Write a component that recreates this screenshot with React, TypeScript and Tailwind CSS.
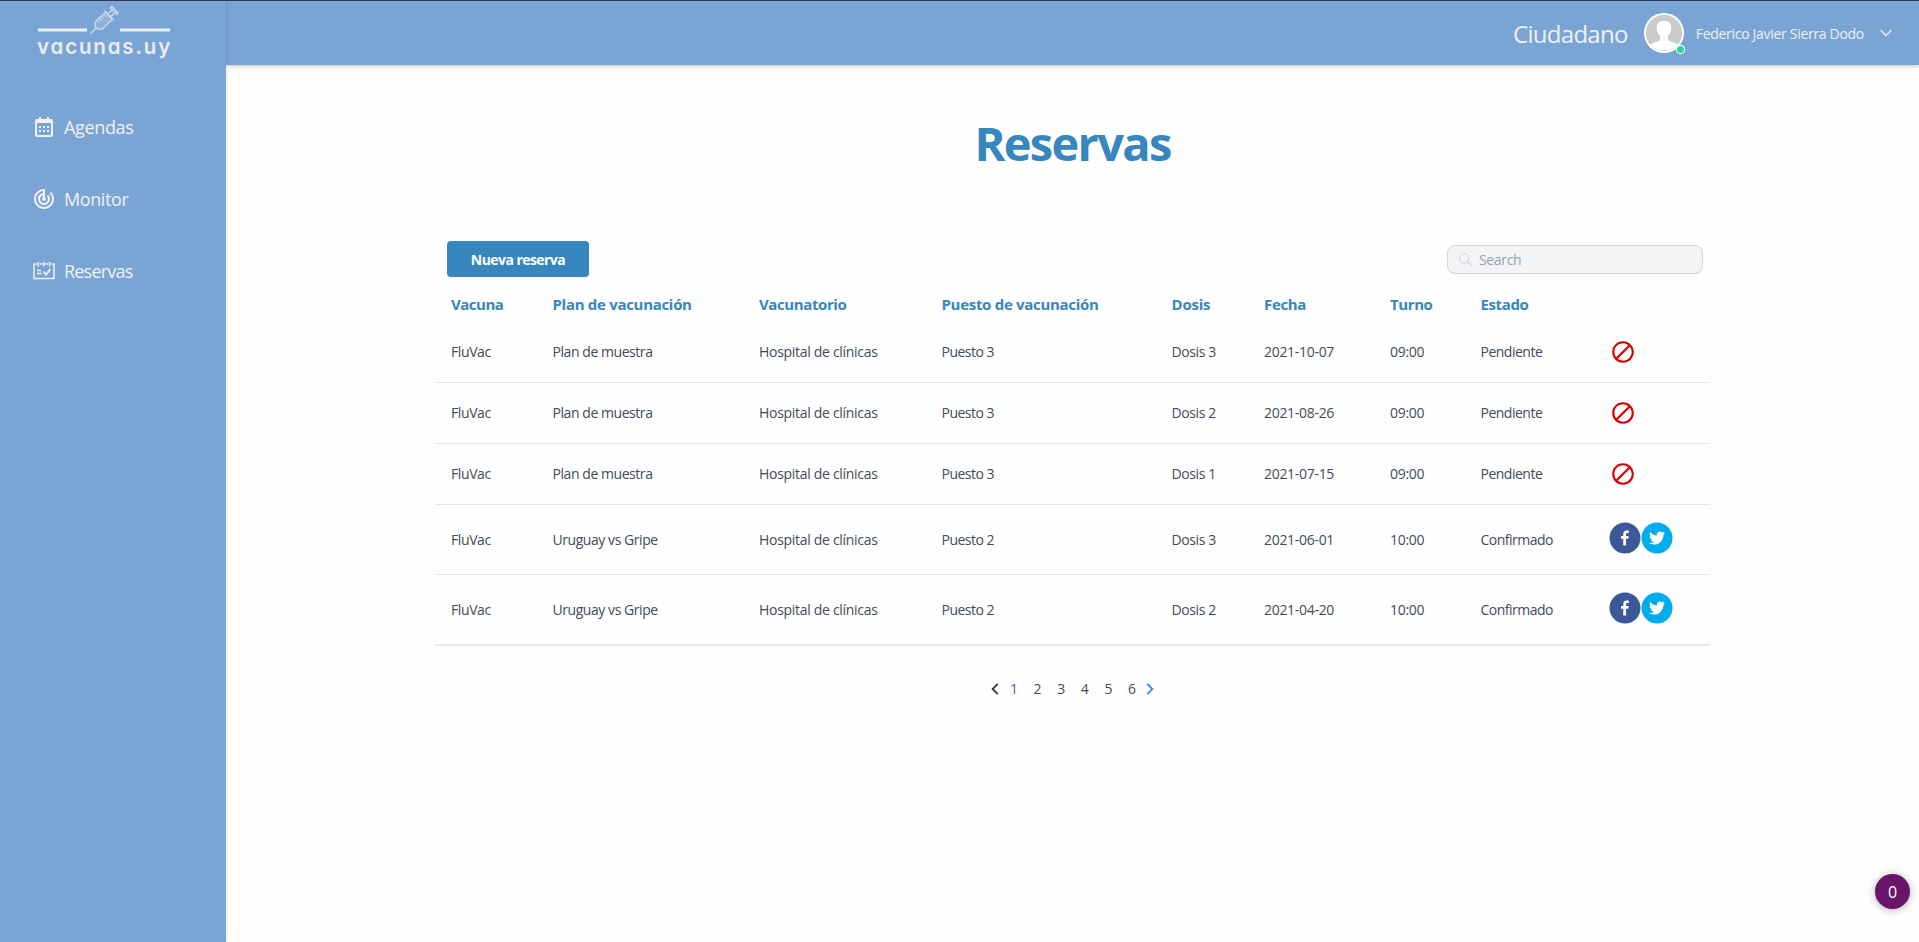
import { BiBlock, BiCalendar } from "react-icons/bi";
import { MdTrackChanges } from "react-icons/md";

const GRID =
  "grid grid-cols-[101.5px_206.5px_182.5px_230px_92.5px_126px_90.5px_128.5px_1fr] items-center pl-4";

const COLUMNS = [
  { label: "Vacuna", head: "tracking-[-0.5px]", cell: "tracking-[-0.4px]" },
  { label: "Plan de vacunación", head: "tracking-[-0.3px]", cell: "tracking-[-0.44px]" },
  { label: "Vacunatorio", head: "tracking-[-0.4px]", cell: "tracking-[-0.3px]" },
  { label: "Puesto de vacunación", head: "tracking-[-0.3px]", cell: "tracking-[-0.5px]" },
  { label: "Dosis", head: "tracking-[-0.2px]", cell: "tracking-[-0.4px]" },
  { label: "Fecha", head: "tracking-[-0.35px]", cell: "tracking-[-0.3px]" },
  { label: "Turno", head: "tracking-[-0.4px]", cell: "tracking-[-0.3px]" },
  { label: "Estado", head: "tracking-[-0.38px]", cell: "tracking-[-0.5px]" },
];

const ROWS = [
  { cells: ["FluVac", "Plan de muestra", "Hospital de clínicas", "Puesto 3", "Dosis 3", "2021-10-07", "09:00", "Pendiente"], done: false },
  { cells: ["FluVac", "Plan de muestra", "Hospital de clínicas", "Puesto 3", "Dosis 2", "2021-08-26", "09:00", "Pendiente"], done: false },
  { cells: ["FluVac", "Plan de muestra", "Hospital de clínicas", "Puesto 3", "Dosis 1", "2021-07-15", "09:00", "Pendiente"], done: false },
  { cells: ["FluVac", "Uruguay vs Gripe", "Hospital de clínicas", "Puesto 2", "Dosis 3", "2021-06-01", "10:00", "Confirmado"], done: true },
  { cells: ["FluVac", "Uruguay vs Gripe", "Hospital de clínicas", "Puesto 2", "Dosis 2", "2021-04-20", "10:00", "Confirmado"], done: true },
];

function Logo() {
  return (
    <div className="ml-[37px] flex w-[134px] flex-col">
      <svg width="134" height="34" viewBox="0 0 134 34" fill="none">
        <path d="M1 29h49M83 29h50" strokeWidth="2.8" stroke="#eceff3" />
        <g transform="translate(53.5 32.5) rotate(-44)" stroke="#c6d8ec" strokeWidth="1.5">
          <path
            d="M8 -1.500l3.500 -3.500H25.500V5H11.500L8 1.500z"
            fill="#c6d8ec"
            fillOpacity="0.25"
          />
          <path d="M0 0H8M26 -6.500V6.500M26 -2H31.500M26 2H31.500M32 -4.500V4.500H34V-4.500z" />
          <path d="M14 -4.500v2.500M17 -4.500v3.500M20 -4.500v2.500M23 -4.500v3.500" strokeWidth="1" />
        </g>
      </svg>
      <span className="-mt-[2px] font-['Inter','Lato',sans-serif] text-[20.5px] leading-[28px] font-semibold tracking-[1.85px] whitespace-nowrap text-[#e8edf4] [font-feature-settings:'cv11']">
        vacunas.uy
      </span>
    </div>
  );
}

function BookingIcon() {
  return (
    <svg width="24" height="24" viewBox="0 0 24 24" fill="none" stroke="currentColor" strokeWidth="1.5">
      <path d="M5 5H2v14.500h20V5h-2.500M8 5h2.500M13 5h3M6.300 3v4.400M11.800 3v4.400M17.600 3v4.400" />
      <path d="M5 11.500H9M5 14.500H9.500M9 17" strokeWidth="1.300" />
      <path d="M11.500 12.500l2.600 3.200 4.200-5.600" strokeWidth="1.8" />
    </svg>
  );
}

function Sidebar() {
  const item = "flex h-[72px] items-center gap-2 pl-8 text-[18px] text-[#f0f1f2]";
  return (
    <aside className="z-10 flex w-[226px] shrink-0 flex-col bg-[#7aa4d3] shadow-[0_0_3px_rgba(0,0,0,0.15)]">
      <Logo />
      <nav className="mt-[30px] flex flex-col">
        <a className={item}>
          <BiCalendar size={24} />
          <span className="tracking-[-0.35px]">Agendas</span>
        </a>
        <a className={item}>
          <MdTrackChanges size={24} />
          <span className="tracking-[-0.4px]">Monitor</span>
        </a>
        <a className={item}>
          <BookingIcon />
          <span className="tracking-[-0.8px]">Reservas</span>
        </a>
      </nav>
    </aside>
  );
}

function Avatar() {
  return (
    <div className="relative ml-4 size-10">
      <svg width="40" height="40" viewBox="0 0 40 40">
        <circle cx="20" cy="20" r="20" fill="#fff" />
        <circle cx="20" cy="20" r="18.2" fill="#cbcbcb" />
        <path
          d="M20 8c-5 0-7.200 2-7 6.500 0 .8-.6 1.100-.4 2.200.2 1.300.8 1.600 1.200 2.300.6 2.300 1.700 3.200 2.300 4.200.3 2.300.1 4-1.500 4.900-2.600 1.400-5.900 1.300-8.400 3.300A18.200 18.200 0 0 0 33.800 31.400c-2.500-2-5.800-1.900-8.400-3.300-1.600-.9-1.800-2.600-1.500-4.900.6-1 1.700-1.900 2.300-4.200.4-.7 1-1 1.200-2.300.2-1.100-.4-1.400-.4-2.200C27.200 10 25 8 20 8z"
          fill="#fff"
        />
      </svg>
      <span className="absolute right-0 bottom-0 size-[7px] rounded-full bg-[#2fd495] ring-1 ring-white" />
    </div>
  );
}

function Header() {
  return (
    <header className="flex h-16 shrink-0 items-center justify-end bg-[#7aa4d3] pr-[26px] text-[#eff0f2] shadow-[0_1px_4px_rgba(0,0,0,0.25)]">
      <span className="pt-0.5 text-2xl tracking-[-0.7px]">Ciudadano</span>
      <Avatar />
      <span className="ml-3 pt-px text-sm tracking-[-0.3px]">Federico Javier Sierra Dodo</span>
      <svg className="ml-[15px]" width="14" height="8" viewBox="0 0 14 8" fill="none" stroke="currentColor" strokeWidth="1.3">
        <path d="M1.500 1l5.500 5.500L12.500 1" />
      </svg>
    </header>
  );
}

function ShareButtons() {
  return (
    <div className="flex -translate-y-[2px]">
      <svg viewBox="0 0 64 64" width="32" height="32">
        <circle cx="32" cy="32" r="31" fill="#3b5998" />
        <path
          d="M34.1,47V33.3h4.6l0.7-5.3h-5.3v-3.4c0-1.5,0.4-2.6,2.6-2.6l2.8,0v-4.8c-0.5-0.1-2.200-0.2-4.1-0.2c-4.1,0-6.9,2.5-6.9,7V28H24v5.3h4.5V47H34.1z"
          fill="#fff"
        />
      </svg>
      <svg viewBox="0 0 64 64" width="32" height="32">
        <circle cx="32" cy="32" r="31" fill="#00aced" />
        <path
          d="M48,22.1c-1.2,0.5-2.4,0.9-3.8,1c1.4-0.8,2.4-2.1,2.9-3.6c-1.3,0.8-2.7,1.3-4.2,1.6C41.7,19.8,40,19,38.2,19c-3.6,0-6.6,2.9-6.6,6.6c0,0.5,0.1,1,0.2,1.5c-5.5-0.3-10.3-2.9-13.5-6.9c-0.6,1-0.9,2.1-0.9,3.3c0,2.3,1.2,4.3,2.9,5.5c-1.1,0-2.1-0.3-3-0.8c0,0,0,0.1,0,0.1c0,3.2,2.3,5.8,5.3,6.4c-0.6,0.1-1.1,0.2-1.7,0.2c-0.4,0-0.8,0-1.2-0.1c0.8,2.6,3.3,4.5,6.1,4.6c-2.2,1.8-5.1,2.8-8.2,2.8c-0.5,0-1.1,0-1.6-0.1c2.9,1.9,6.4,2.9,10.1,2.9c12.1,0,18.7-10,18.7-18.7c0-0.3,0-0.6,0-0.8C46,24.5,47.1,23.4,48,22.1z"
          fill="#fff"
        />
      </svg>
    </div>
  );
}

function Toolbar() {
  return (
    <div className="flex h-9 justify-between pr-[7px] pl-3">
      <button className="h-9 w-[142px] rounded bg-[#3786bd] pt-px text-sm font-bold tracking-[-0.55px] text-white">
        Nueva reserva
      </button>
      <label className="mt-1 flex h-[29px] w-64 items-center rounded-lg border border-gray-300 bg-gray-100 pl-[11px] text-sm text-gray-400">
        <svg width="13" height="13" viewBox="0 0 13 13" fill="none" stroke="#d0d3d8" strokeWidth="1.1">
          <circle cx="5.300" cy="5.300" r="4.600" />
          <path d="M8.600 8.600l4 4" />
        </svg>
        <span className="ml-[7px] pt-px tracking-[-0.35px]">Search</span>
      </label>
    </div>
  );
}

function ReservationsTable() {
  return (
    <div className="flex flex-col">
      <div className={`${GRID} h-[45px] pt-[10px] text-[15px] font-bold text-[#3786bd]`}>
        {COLUMNS.map((c) => (
          <span key={c.label} className={c.head}>
            {c.label}
          </span>
        ))}
      </div>
      <div className="flex flex-col text-sm text-[#434b5a] shadow-[0_1px_1px_rgba(0,0,0,0.08)]">
        {ROWS.map((row, i) => (
          <div
            key={i}
            className={`${GRID} border-b border-gray-200 ${row.done ? "h-[70px]" : "h-[61px]"}`}
          >
            {row.cells.map((cell, j) => (
              <span key={j} className={COLUMNS[j].cell}>
                {cell}
              </span>
            ))}
            {row.done ? <ShareButtons /> : <BiBlock size={26} color="#d60000" className="ml-px -scale-x-100" />}
          </div>
        ))}
      </div>
    </div>
  );
}

function Pagination() {
  return (
    <div className="mt-8 flex h-6 items-center justify-center text-sm text-[#434b5a]">
      <svg width="8" height="12" viewBox="0 0 8 12" fill="none" stroke="#2b3442" strokeWidth="1.8">
        <path d="M6.800 0.800L1.600 6l5.200 5.200" />
      </svg>
      <div className="flex pr-[2px] pl-[3px]">
        {["1", "2", "3", "4", "5", "6"].map((n) => (
          <span key={n} className={`w-[23.6px] text-center ${n === "1" ? "text-[#5b50dd]" : ""}`}>
            {n}
          </span>
        ))}
      </div>
      <svg width="8" height="12" viewBox="0 0 8 12" fill="none" stroke="#3b82f6" strokeWidth="1.8">
        <path d="M1.200 0.800L6.400 6l-5.200 5.200" />
      </svg>
    </div>
  );
}

export default function App() {
  return (
    <div className="flex h-[942px] w-[1919px] flex-col overflow-hidden border-t border-[#31384a] bg-[#fefefe] font-['Open_Sans','Noto_Sans',sans-serif]">
      <div className="flex min-h-0 flex-1">
        <Sidebar />
        <div className="flex flex-1 flex-col">
          <Header />
          <main className="flex flex-col pr-[209px] pl-[209px]">
            <h1 className="mt-[46px] text-center text-[47px] leading-[64px] font-bold tracking-[-1.7px] text-[#3786bd]">
              Reservas
            </h1>
            <div className="mt-[66px] flex flex-col">
              <Toolbar />
              <ReservationsTable />
              <Pagination />
            </div>
          </main>
        </div>
      </div>
      <div className="absolute top-[874px] left-[1875px] flex size-[35px] items-center justify-center rounded-full bg-[#68156a] text-base text-white shadow-[0_1px_8px_rgba(0,0,0,0.3)]">
        0
      </div>
    </div>
  );
}
